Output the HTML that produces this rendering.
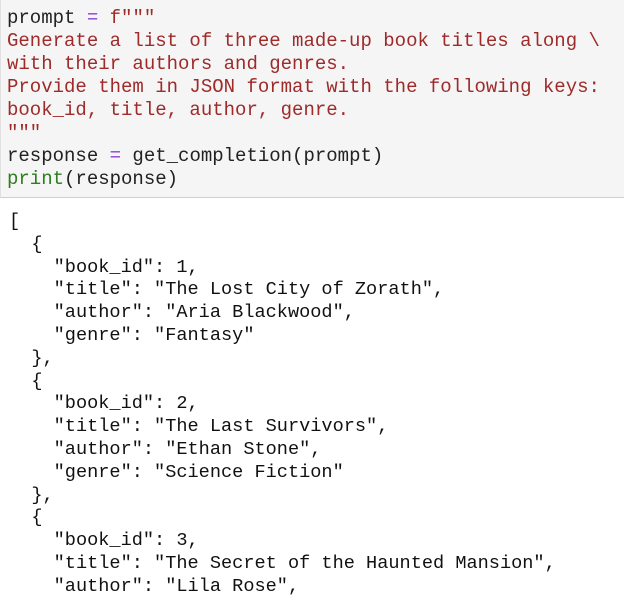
<!DOCTYPE html>
<html><head><style>
body{margin:0;width:624px;height:582px;overflow:hidden;background:#fff;font-family:"Liberation Mono",monospace;}
.cell{position:absolute;left:0;top:0;width:630px;height:197px;background:#f5f5f5;border-bottom:1px solid #cfcfcf;border-left:1px solid #e0e0e0;}
pre{margin:0;font-family:"Liberation Mono",monospace;white-space:pre;}
.in{position:absolute;left:7px;top:7px;font-size:19px;line-height:23px;color:#222;}
.s{color:#9e2a2a}.o{color:#8a3fd0}.g{color:#2e7d1f}
.out{position:absolute;left:9px;top:211px;font-size:18.6px;line-height:22.8px;color:#111;}
</style></head><body>
<div class="cell"></div>
<pre class="in">prompt <span class="o">=</span> <span class="s">f"""
Generate a list of three made-up book titles along \
with their authors and genres.
Provide them in JSON format with the following keys:
book_id, title, author, genre.
"""</span>
response <span class="o">=</span> get_completion(prompt)
<span class="g">print</span>(response)</pre>
<pre class="out">[
  {
    "book_id": 1,
    "title": "The Lost City of Zorath",
    "author": "Aria Blackwood",
    "genre": "Fantasy"
  },
  {
    "book_id": 2,
    "title": "The Last Survivors",
    "author": "Ethan Stone",
    "genre": "Science Fiction"
  },
  {
    "book_id": 3,
    "title": "The Secret of the Haunted Mansion",
    "author": "Lila Rose",</pre>
</body></html>
